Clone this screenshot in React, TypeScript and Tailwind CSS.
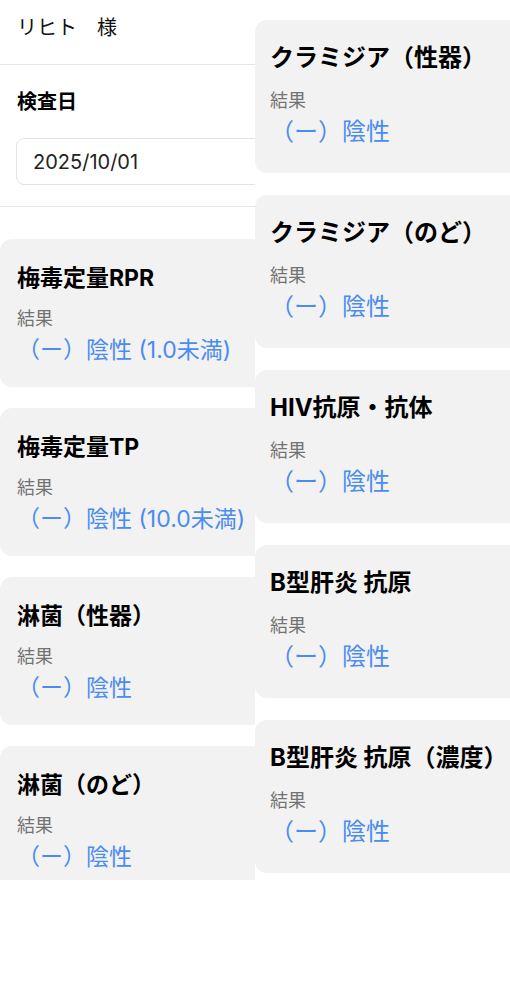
const font = { fontFamily: 'Inter, "Noto Sans CJK JP", sans-serif' };

type Result = { name: string; value: string };

const leftResults: Result[] = [
  { name: '梅毒定量RPR', value: '（ー）陰性 (1.0未満)' },
  { name: '梅毒定量TP', value: '（ー）陰性 (10.0未満)' },
  { name: '淋菌（性器）', value: '（ー）陰性' },
  { name: '淋菌（のど）', value: '（ー）陰性' },
];

const rightResults: Result[] = [
  { name: 'クラミジア（性器）', value: '（ー）陰性' },
  { name: 'クラミジア（のど）', value: '（ー）陰性' },
  { name: 'HIV抗原・抗体', value: '（ー）陰性' },
  { name: 'B型肝炎 抗原', value: '（ー）陰性' },
  { name: 'B型肝炎 抗原（濃度）', value: '（ー）陰性' },
];

function LeftCard({ item }: { item: Result }) {
  return (
    <div className="bg-[#f2f2f2] rounded-xl pt-[26px] pb-[24px] px-[17px]">
      <h3 className="text-[23px] leading-[26px] font-bold text-black whitespace-nowrap">{item.name}</h3>
      <p className="mt-[18px] text-[18px] leading-[20px] text-[#737373]">結果</p>
      <p className="mt-[8px] text-[23px] leading-[26px] text-[#4a8cef] whitespace-nowrap">{item.value}</p>
    </div>
  );
}

function RightCard({ item }: { item: Result }) {
  return (
    <div className="bg-[#f2f2f2] rounded-xl pt-[24px] pb-[27px] px-[15px]">
      <h3 className="text-[24px] leading-[28px] font-bold text-black whitespace-nowrap">{item.name}</h3>
      <p className="mt-[19px] text-[18px] leading-[20px] text-[#737373]">結果</p>
      <p className="mt-[7px] text-[24px] leading-[28px] text-[#4a8cef] whitespace-nowrap">{item.value}</p>
    </div>
  );
}

export default function App() {
  return (
    <div className="w-[510px] h-[1008px] bg-white flex overflow-hidden" style={font}>
      <div className="w-[255px] h-[880px] overflow-hidden shrink-0">
        <div className="w-[380px]">
          <header className="h-[65px] pt-[16px] px-[17px] border-b border-[#e6e6e6]">
            <span className="block text-[20px] leading-[24px] text-[#111]">リヒト　様</span>
          </header>
          <section className="pt-[24px] pb-[21px] px-[16px] border-b border-[#e6e6e6]">
            <h2 className="text-[20px] leading-[26px] font-bold text-black pl-[1px]">検査日</h2>
            <div className="mt-[23px] h-[47px] rounded-lg border border-[#e3e3e3] flex items-center px-[16px]">
              <span className="text-[20px] text-[#222]">2025/10/01</span>
            </div>
          </section>
          <div className="mt-[32px] flex flex-col gap-[21px]">
            {leftResults.map((r) => (
              <LeftCard key={r.name} item={r} />
            ))}
          </div>
        </div>
      </div>
      <div className="w-[255px] h-[873px] overflow-hidden shrink-0 bg-white">
        <div className="w-[320px] pt-[20px] flex flex-col gap-[22px]">
          {rightResults.map((r) => (
            <RightCard key={r.name} item={r} />
          ))}
        </div>
      </div>
    </div>
  );
}
